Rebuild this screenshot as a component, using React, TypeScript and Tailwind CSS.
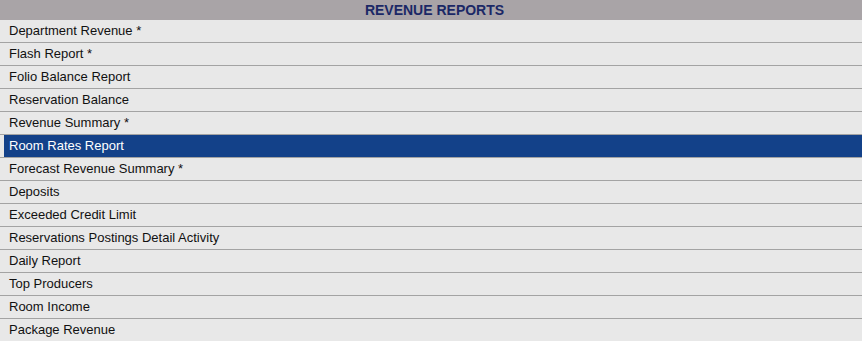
const reports = [
    "Department Revenue *",
    "Flash Report *",
    "Folio Balance Report",
    "Reservation Balance",
    "Revenue Summary *",
    "Room Rates Report",
    "Forecast Revenue Summary *",
    "Deposits",
    "Exceeded Credit Limit",
    "Reservations Postings Detail Activity",
    "Daily Report",
    "Top Producers",
    "Room Income",
    "Package Revenue",
];

const selected = "Room Rates Report";

export default function App() {
    return (
        <section className="h-[341px] w-[862px] overflow-hidden bg-[#e8e8e8] font-['Liberation_Sans',Arial,sans-serif]">
            <div className="flex h-5 items-center justify-center bg-[#a9a4a7] pl-[7px] text-[14px] font-bold text-[#1b2866]">
                REVENUE REPORTS
            </div>
            <ul>
                {reports.map((name) => (
                    <li
                        key={name}
                        className="h-[23px] border-b border-[#a3a3a3]">
                        {name === selected ? (
                            <div className="ml-1 flex h-[22px] items-center bg-[#134189] pl-[5px] text-[13px] text-white">
                                {name}
                            </div>
                        ) : (
                            <div className="flex h-[22px] items-center pl-[9px] text-[13px] text-[#111]">
                                {name}
                            </div>
                        )}
                    </li>
                ))}
            </ul>
        </section>
    );
}
